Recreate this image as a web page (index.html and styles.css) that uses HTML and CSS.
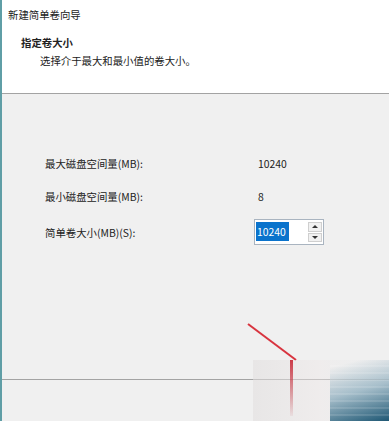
FILE: index.html
```html
<!DOCTYPE html>
<html lang="zh-CN">

<head>
  <meta charset="UTF-8" />
  <title>新建简单卷向导</title>
  <link rel="stylesheet" href="styles.css">
</head>

<body>
  <div class="okno">
    <div class="hlavicka">
      <div class="titulek">新建简单卷向导</div>
      <div class="krok">指定卷大小</div>
      <div class="popis">选择介于最大和最小值的卷大小。</div>
    </div>

    <div class="obsah">
      <div class="formular">
        <div class="stitek">最大磁盘空间量(MB):</div>
        <div class="hodnota">10240</div>
        <div class="stitek">最小磁盘空间量(MB):</div>
        <div class="hodnota">8</div>
        <div class="stitek">简单卷大小(MB)(S):</div>
        <div class="spin">
          <div class="spin-pole"><span class="vyber">10240</span></div>
          <div class="spin-tlacitka">
            <div class="spin-tl"><span class="sipka nahoru"></span></div>
            <div class="spin-tl"><span class="sipka dolu"></span></div>
          </div>
        </div>
      </div>
    </div>

    <div class="paticka"></div>

    <svg class="sipka-cervena" width="60" height="44" viewBox="0 0 60 44">
      <line x1="2" y1="2" x2="50" y2="38" stroke="#d8343f" stroke-width="2" />
    </svg>
    <div class="rozmazani">
      <div class="cara"></div>
      <div class="znak"></div>
    </div>
  </div>
</body>

</html>
```

FILE: styles.css
```css
body {
  margin: 0;
  font-family: "Noto Sans CJK SC", "Noto Sans", sans-serif;
  font-size: 10.4px;
  color: #222;
}

.okno {
  position: relative;
  width: 387px;
  height: 421px;
  border-left: 2px solid #5f9ea6;
  background-color: #f0f0f0;
  display: flex;
  flex-direction: column;
  overflow: hidden;
}

.hlavicka {
  height: 94px;
  background-color: #fff;
  border-bottom: 1px solid #a3a3a3;
  padding-left: 6px;
  box-sizing: border-box;
}

.titulek {
  padding-top: 8px;
  line-height: 14px;
}

.krok {
  font-weight: bold;
  margin-top: 14px;
  padding-left: 13px;
  line-height: 14px;
}

.popis {
  margin-top: 4px;
  padding-left: 32px;
  line-height: 14px;
}

.obsah {
  height: 286px;
  border-bottom: 1px solid #a3a3a3;
  padding-top: 59px;
  padding-left: 43px;
  box-sizing: border-box;
}

.formular {
  display: grid;
  grid-template-columns: 209px auto;
  grid-template-rows: 20px 20px 26px;
  row-gap: 13px;
  align-items: center;
}

.hodnota {
  padding-left: 4px;
}

.spin {
  width: 70px;
  height: 26px;
  box-sizing: border-box;
  border: 1px solid #a9b4c0;
  background-color: #fff;
  display: flex;
}

.spin-pole {
  flex: 1;
  padding: 2px 0 0 1px;
}

.vyber {
  display: inline-block;
  background-color: #0a73cc;
  color: #fff;
  line-height: 19px;
  padding: 0 3px 0 1px;
}

.spin-tlacitka {
  width: 14px;
  margin: 2px 1px 2px 0;
  display: flex;
  flex-direction: column;
  gap: 1px;
}

.spin-tl {
  flex: 1;
  background-color: #f1f1f1;
  border: 1px solid #cfcfcf;
  display: flex;
  align-items: center;
  justify-content: center;
}

.sipka {
  width: 0;
  height: 0;
  border-left: 3px solid transparent;
  border-right: 3px solid transparent;
}

.nahoru {
  border-bottom: 3px solid #333;
}

.dolu {
  border-top: 3px solid #333;
}

.paticka {
  flex: 1;
}

.sipka-cervena {
  position: absolute;
  left: 244px;
  top: 322px;
}

.rozmazani {
  position: absolute;
  left: 251px;
  top: 360px;
  width: 136px;
  height: 61px;
  background: linear-gradient(90deg, rgba(225, 222, 222, 0.55), rgba(238, 232, 232, 0.45) 50%, rgba(230, 230, 232, 0.35) 70%);
}

.cara {
  position: absolute;
  left: 37px;
  top: 0;
  width: 3px;
  height: 56px;
  background: linear-gradient(180deg, rgba(200, 40, 55, 0.9), rgba(200, 80, 90, 0.5) 60%, rgba(200, 120, 130, 0.1));
}

.znak {
  position: absolute;
  left: 77px;
  top: 0;
  width: 59px;
  height: 61px;
  background:
    repeating-linear-gradient(180deg, rgba(255, 255, 255, 0) 0 5px, rgba(255, 255, 255, 0.12) 5px 7px),
    linear-gradient(165deg, rgba(240, 240, 240, 0.3) 10%, rgba(120, 160, 180, 0.6) 50%, rgba(20, 80, 110, 0.95) 100%);
}
```
